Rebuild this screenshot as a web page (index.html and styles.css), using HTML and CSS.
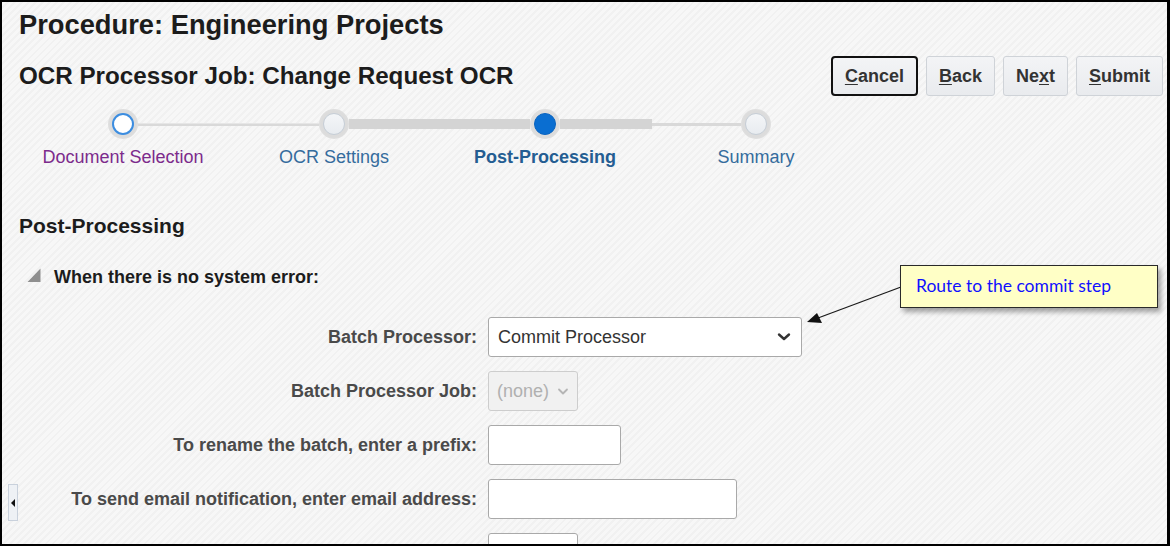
FILE: index.html
```html
<!DOCTYPE html>
<html>
<head>
<meta charset="utf-8">
<link rel="stylesheet" href="styles.css">
</head>
<body>
<div class="frame">
  <h1 class="title">Procedure: Engineering Projects</h1>
  <div class="jobbar">
    <h2 class="subtitle">OCR Processor Job: Change Request OCR</h2>
    <div class="buttons">
      <button class="btn btn-focus"><u>C</u>ancel</button>
      <button class="btn"><u>B</u>ack</button>
      <button class="btn">Ne<u>x</u>t</button>
      <button class="btn"><u>S</u>ubmit</button>
    </div>
  </div>

  <div class="stepper">
    <div class="halo"><div class="dot dot-visited"></div></div>
    <div class="conn conn-thin"></div>
    <div class="halo"><div class="dot dot-idle"></div></div>
    <div class="conn conn-thick"></div>
    <div class="halo"><div class="dot dot-active"></div></div>
    <div class="conn conn-split"><div class="part-thick"></div><div class="part-thin"></div></div>
    <div class="halo"><div class="dot dot-idle"></div></div>
  </div>
  <div class="step-labels">
    <span class="lbl lbl-visited">Document Selection</span>
    <span class="lbl">OCR Settings</span>
    <span class="lbl lbl-active">Post-Processing</span>
    <span class="lbl">Summary</span>
  </div>

  <h3 class="section">Post-Processing</h3>
  <div class="disclosure">
    <svg class="tri" width="14" height="16" viewBox="0 0 14 16"><polygon points="0.5,15 13.5,15 13.5,1.5" fill="#8f8f8f"/></svg>
    <span>When there is no system error:</span>
  </div>

  <div class="form">
    <label class="flabel">Batch Processor:</label>
    <div class="select sel-main"><span>Commit Processor</span>
      <svg width="14" height="10" viewBox="0 0 14 10"><path d="M2 2.5 L7 7 L12 2.5" fill="none" stroke="#333" stroke-width="2.4" stroke-linecap="round" stroke-linejoin="round"/></svg>
    </div>

    <label class="flabel">Batch Processor Job:</label>
    <div class="select sel-disabled"><span>(none)</span>
      <svg width="12" height="9" viewBox="0 0 12 9"><path d="M2 2.5 L6 6.5 L10 2.5" fill="none" stroke="#b5b5b5" stroke-width="1.8" stroke-linecap="round" stroke-linejoin="round"/></svg>
    </div>

    <label class="flabel">To rename the batch, enter a prefix:</label>
    <div class="input in-prefix"></div>

    <label class="flabel">To send email notification, enter email address:</label>
    <div class="input in-email"></div>

    <span class="flabel"></span>
    <div class="input in-last"></div>
  </div>

  <div class="side-handle">
    <svg width="6" height="10" viewBox="0 0 6 10"><polygon points="5,1 1,5 5,9" fill="#111"/></svg>
  </div>

  <svg class="arrow" width="110" height="50" viewBox="800 280 110 50">
    <line x1="901" y1="287" x2="818" y2="318" stroke="#1a1a1a" stroke-width="1.3"/>
    <polygon points="807,322 817,313 822,323" fill="#111"/>
  </svg>
  <div class="callout">Route to the commit step</div>
</div>
</body>
</html>
```

FILE: styles.css
```css
* { box-sizing: border-box; }

html, body {
  margin: 0;
  padding: 0;
  background: #fff;
}

.frame {
  position: relative;
  width: 1170px;
  height: 546px;
  overflow: hidden;
  border: 2px solid #000;
  border-right-width: 3px;
  padding: 0 4px 0 17px;
  font-family: "Liberation Sans", Arial, sans-serif;
  color: #222;
  background-color: #f5f5f5;
  background-image: repeating-linear-gradient(135deg, #f7f7f7 0 3px, #f1f1f1 3px 5px);
}

.title {
  margin: 0;
  font-size: 27.3px;
  line-height: 46px;
  font-weight: bold;
  color: #1c1c1c;
}

.jobbar {
  display: flex;
  align-items: center;
  justify-content: space-between;
  margin-top: 8px;
  height: 40px;
}

.subtitle {
  margin: 0;
  font-size: 24.2px;
  line-height: 40px;
  font-weight: bold;
  color: #1c1c1c;
}

.buttons {
  display: flex;
  gap: 8px;
}

.btn {
  height: 40px;
  padding: 0 12px;
  border: 1px solid #cfd3d8;
  border-radius: 3px;
  background: linear-gradient(#f3f4f6, #e9ebee);
  font-family: "Liberation Sans", Arial, sans-serif;
  font-size: 18px;
  font-weight: bold;
  color: #333;
}

.btn-focus {
  border: 2px solid #111;
  border-radius: 4px;
  padding: 0 12px;
}

.btn u { text-decoration-thickness: 1px; text-underline-offset: 2px; }

/* stepper */
.stepper {
  display: flex;
  align-items: center;
  margin: 13px 0 0 89px;
  height: 30px;
}

.halo {
  width: 30px;
  height: 30px;
  border-radius: 50%;
  background: radial-gradient(circle, #dcdcdc 60%, #e8e8e8 100%);
  display: flex;
  align-items: center;
  justify-content: center;
  flex: none;
}

.dot {
  width: 22px;
  height: 22px;
  border-radius: 50%;
}

.dot-visited {
  background: #fff;
  border: 2px solid #3c8de0;
}

.dot-idle {
  background: linear-gradient(#f4f6f8, #e8ecf0);
  border: 1px solid #c6ced7;
}

.dot-active {
  background: #0a6ed1;
  border: 1px solid #0a64c0;
}

.conn { flex: none; width: 181px; }
.conn-thin {
  height: 3px;
  background: #d9d9d9;
  border-top: 1px solid #e6e6e6;
}
.conn-thick {
  height: 10px;
  background: #d4d4d4;
}
.conn-split {
  display: flex;
  align-items: center;
  height: 10px;
}
.part-thick { width: 92px; height: 10px; background: #d4d4d4; }
.part-thin { flex: 1; height: 3px; background: #d9d9d9; }

.step-labels {
  display: grid;
  grid-template-columns: repeat(4, 211px);
  margin: 7px 0 0 -1.5px;
  line-height: 22px;
  font-size: 18px;
}

.lbl {
  text-align: center;
  color: #356c9d;
}
.lbl-visited { color: #7c2b8c; }
.lbl-active { color: #245d92; font-weight: bold; }

.section {
  margin: 43px 0 0;
  font-size: 21px;
  line-height: 30px;
  font-weight: bold;
  color: #1c1c1c;
}

.disclosure {
  display: flex;
  align-items: center;
  margin-top: 23px;
  height: 26px;
  font-size: 18px;
  font-weight: bold;
  color: #1c1c1c;
}

.tri { margin: 0 13px 0 8px; position: relative; top: -2px; }

/* form */
.form {
  display: grid;
  grid-template-columns: 458px auto;
  column-gap: 11px;
  row-gap: 14px;
  margin-top: 27px;
  justify-items: start;
  align-items: center;
}

.flabel {
  justify-self: end;
  font-size: 18px;
  font-weight: bold;
  color: #4a4a4a;
}

.select, .input {
  height: 40px;
  border: 1px solid #a9a9a9;
  border-radius: 3px;
  background: #fff;
}

.select {
  display: flex;
  align-items: center;
  justify-content: space-between;
  font-size: 18px;
  color: #333;
}

.sel-main {
  width: 314px;
  padding: 0 10px 0 9px;
}

.sel-disabled {
  width: 90px;
  padding: 0 8px 0 8px;
  background: #f1f1f1;
  border-color: #cdcdcd;
  color: #b0b0b0;
}

.in-prefix { width: 133px; }
.in-email { width: 249px; }
.in-last { width: 90px; }

.side-handle {
  position: absolute;
  left: 6px;
  top: 482px;
  width: 10px;
  height: 37px;
  border: 1px solid #c9d1dc;
  background: #eef1f5;
  display: flex;
  align-items: center;
  justify-content: center;
}

.arrow {
  position: absolute;
  left: 798px;
  top: 278px;
}

.callout {
  position: absolute;
  left: 898px;
  top: 263px;
  width: 258px;
  height: 43px;
  padding: 0 0 3px 15px;
  display: flex;
  align-items: center;
  background: #ffffc6;
  border: 1px solid #2a2a2a;
  box-shadow: 3px 4px 5px rgba(0,0,0,0.35);
  font-family: Lato, "Liberation Sans", sans-serif;
  font-size: 17.5px;
  color: #1010ff;
}
```
